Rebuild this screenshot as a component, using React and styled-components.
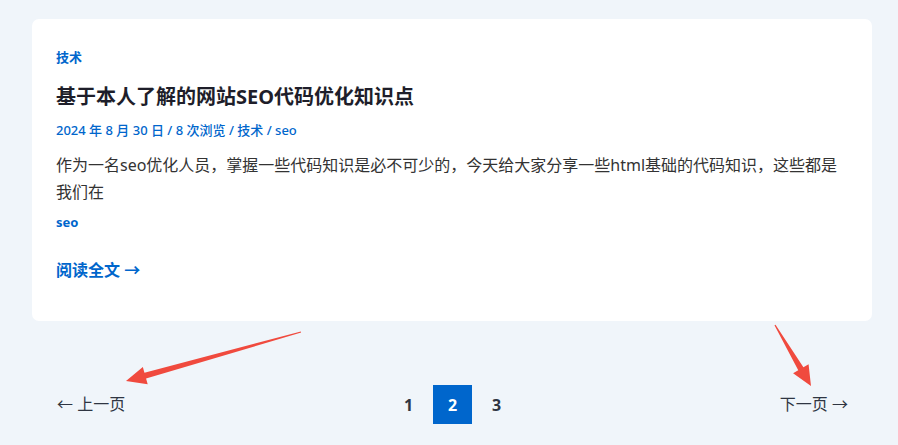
import React from 'react'
import styled, { createGlobalStyle } from 'styled-components'

const GlobalStyle = createGlobalStyle`
  html, body {
    margin: 0;
    padding: 0;
    background: #f0f5fa;
  }
  body {
    font-family: "Noto Sans", "Noto Sans CJK SC", sans-serif;
    color: #333;
  }
`

const blue = '#0066cc'

const Page = styled.div`
  position: relative;
  width: 898px;
  height: 445px;
  padding: 19px 26px 0 32px;
  box-sizing: border-box;
  overflow: hidden;
`

const Card = styled.article`
  background: #fff;
  border-radius: 7px;
  padding: 27px 24px 30px;
  height: 302px;
  box-sizing: border-box;
`

const Category = styled.a`
  display: block;
  color: ${blue};
  font-size: 13px;
  font-weight: 700;
  line-height: 22px;
`

const Title = styled.h2`
  margin: 14px 0 0;
  font-size: 20px;
  font-weight: 700;
  color: #1e1e2a;
  line-height: 30px;
`

const Meta = styled.div`
  margin-top: 8px;
  font-size: 13px;
  line-height: 20px;
  color: ${blue};
  font-weight: 500;
`

const Excerpt = styled.p`
  margin: 12px 0 0;
  font-size: 16px;
  line-height: 27px;
  color: #333;
`

const Tag = styled.a`
  display: block;
  margin-top: 7px;
  color: ${blue};
  font-size: 13px;
  font-weight: 700;
  line-height: 18px;
`

const ReadMore = styled.a`
  display: inline-block;
  margin-top: 27px;
  color: ${blue};
  font-size: 16px;
  font-weight: 700;
  line-height: 24px;
`

const Pager = styled.nav`
  display: flex;
  align-items: center;
  justify-content: space-between;
  margin-top: 64px;
  padding: 0 24px 0 25px;
`

const PagerLink = styled.a`
  font-size: 16px;
  color: #2f3542;
  line-height: 39px;
`

const Numbers = styled.div`
  display: flex;
  align-items: center;
`

const Num = styled.span`
  width: 39px;
  height: 39px;
  display: flex;
  align-items: center;
  justify-content: center;
  font-size: 16px;
  font-weight: 700;
  color: ${p => (p.$active ? '#fff' : '#2f3542')};
  background: ${p => (p.$active ? blue : 'transparent')};
  margin: 0 2.5px;
`

const Overlay = styled.svg`
  position: absolute;
  left: 0;
  top: 0;
  pointer-events: none;
`

function Arrow({ x1, y1, x2, y2 }) {
  const dx = x2 - x1
  const dy = y2 - y1
  const len = Math.hypot(dx, dy)
  const ux = dx / len
  const uy = dy / len
  const px = -uy
  const py = ux
  const headLen = 20
  const headW = 9
  const bx = x2 - ux * headLen
  const by = y2 - uy * headLen
  const shaft = 3
  const pts = [
    [x1 + px * 0.6, y1 + py * 0.6],
    [bx + px * shaft, by + py * shaft],
    [bx + px * headW, by + py * headW],
    [x2, y2],
    [bx - px * headW, by - py * headW],
    [bx - px * shaft, by - py * shaft],
    [x1 - px * 0.6, y1 - py * 0.6],
  ]
  return <polygon points={pts.map(p => p.join(',')).join(' ')} fill="#f04a3e" />
}

export default function App() {
  return (
    <>
      <GlobalStyle />
      <Page>
        <Card>
          <Category>技术</Category>
          <Title>基于本人了解的网站SEO代码优化知识点</Title>
          <Meta>2024 年 8 月 30 日 / 8 次浏览 / 技术 / seo</Meta>
          <Excerpt>
            作为一名seo优化人员，掌握一些代码知识是必不可少的，今天给大家分享一些html基础的代码知识，这些都是我们在
          </Excerpt>
          <Tag>seo</Tag>
          <ReadMore>阅读全文 →</ReadMore>
        </Card>
        <Pager>
          <PagerLink>← 上一页</PagerLink>
          <Numbers>
            <Num>1</Num>
            <Num $active>2</Num>
            <Num>3</Num>
          </Numbers>
          <PagerLink>下一页 →</PagerLink>
        </Pager>
        <Overlay width="898" height="445">
          <Arrow x1={301} y1={332} x2={126} y2={381} />
          <Arrow x1={775} y1={325} x2={811} y2={386} />
        </Overlay>
      </Page>
    </>
  )
}
